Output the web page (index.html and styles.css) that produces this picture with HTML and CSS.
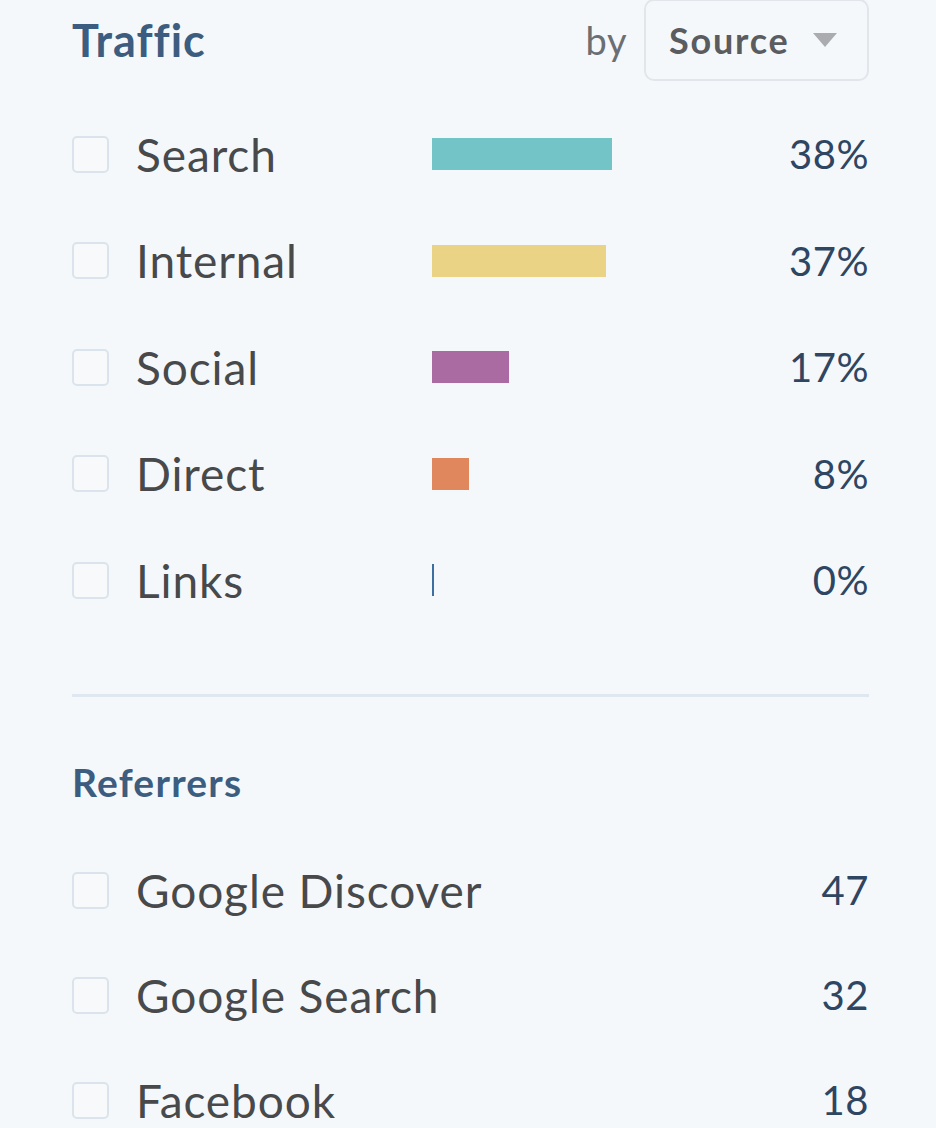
FILE: index.html
```html
<!DOCTYPE html>
<html>
<head>
    <title>Traffic</title>
    <link rel="stylesheet" href="styles.css">
</head>
<body>
    <div class="panel">
        <div class="panel-head">
            <h1>Traffic</h1>
            <div class="by">
                <span class="by-label">by</span>
                <div class="select">
                    <span>Source</span>
                    <span class="caret"></span>
                </div>
            </div>
        </div>

        <div class="list">
            <div class="row">
                <span class="check"></span>
                <span class="name">Search</span>
                <span class="bar-cell"><span class="bar teal" style="width: 180px"></span></span>
                <span class="value">38%</span>
            </div>
            <div class="row">
                <span class="check"></span>
                <span class="name">Internal</span>
                <span class="bar-cell"><span class="bar yellow" style="width: 174px"></span></span>
                <span class="value">37%</span>
            </div>
            <div class="row">
                <span class="check"></span>
                <span class="name">Social</span>
                <span class="bar-cell"><span class="bar purple" style="width: 77px"></span></span>
                <span class="value">17%</span>
            </div>
            <div class="row">
                <span class="check"></span>
                <span class="name">Direct</span>
                <span class="bar-cell"><span class="bar orange" style="width: 37px"></span></span>
                <span class="value">8%</span>
            </div>
            <div class="row">
                <span class="check"></span>
                <span class="name">Links</span>
                <span class="bar-cell"><span class="bar empty"></span></span>
                <span class="value">0%</span>
            </div>
        </div>

        <hr class="divider">

        <h2>Referrers</h2>

        <div class="list refs">
            <div class="row">
                <span class="check"></span>
                <span class="name">Google Discover</span>
                <span class="value">47</span>
            </div>
            <div class="row">
                <span class="check"></span>
                <span class="name">Google Search</span>
                <span class="value">32</span>
            </div>
            <div class="row">
                <span class="check"></span>
                <span class="name">Facebook</span>
                <span class="value">18</span>
            </div>
        </div>
    </div>
</body>
</html>
```

FILE: styles.css
```css
body {
    margin: 0;
    background: #f5f8fb;
    font-family: Lato, "Open Sans", sans-serif;
    font-variant-ligatures: none;
    overflow: hidden;
}
.panel {
    padding: 0 67px 0 72px;
}
.panel-head {
    display: flex;
    align-items: center;
    justify-content: space-between;
    height: 82px;
    margin-top: -1px;
}
h1 {
    margin: 0;
    font-size: 45px;
    font-weight: 700;
    color: #3c5d7f;
    letter-spacing: 1px;
}
.by {
    display: flex;
    align-items: center;
    gap: 17px;
}
.by-label {
    font-size: 38px;
    color: #6b6e72;
    letter-spacing: 0.5px;
}
.select {
    display: flex;
    align-items: center;
    justify-content: space-between;
    box-sizing: border-box;
    width: 225px;
    height: 82px;
    padding: 0 30px 0 23px;
    border: 2px solid #e2e6ea;
    border-radius: 10px;
    font-size: 36px;
    font-weight: 700;
    color: #5a5c5f;
    letter-spacing: 1.8px;
}
.caret {
    width: 0;
    height: 0;
    border-left: 12px solid transparent;
    border-right: 12px solid transparent;
    border-top: 14px solid #aaacaf;
}
.list {
    margin-top: 20px;
}
.row {
    display: flex;
    align-items: center;
    height: 106.5px;
}
.check {
    box-sizing: border-box;
    width: 37px;
    height: 37px;
    margin-right: 27px;
    border: 2px solid #dbe4ec;
    border-radius: 5px;
    background: #f7f9fb;
}
.name {
    width: 296px;
    font-size: 46px;
    color: #48494b;
    letter-spacing: 0.9px;
}
.bar-cell {
    flex: 1;
    display: flex;
    align-items: center;
}
.bar {
    display: block;
    height: 32px;
}
.teal { background: #72c4c6; }
.yellow { background: #ead385; }
.purple { background: #a96ba2; }
.orange { background: #e0875e; }
.bar.empty {
    width: 2px;
    background: #3d6ea0;
}
.value {
    margin-left: auto;
    font-size: 40px;
    color: #2e4662;
    letter-spacing: 0.5px;
}
.divider {
    margin: 60px 0 0;
    border: none;
    border-top: 3px solid #dfe8f1;
}
h2 {
    margin: 62px 0 0;
    font-size: 39px;
    font-weight: 700;
    color: #3c5d7f;
    letter-spacing: 1.2px;
}
.refs {
    margin-top: 33px;
}
.refs .row {
    height: 105px;
}
.refs .name {
    width: auto;
}
```
